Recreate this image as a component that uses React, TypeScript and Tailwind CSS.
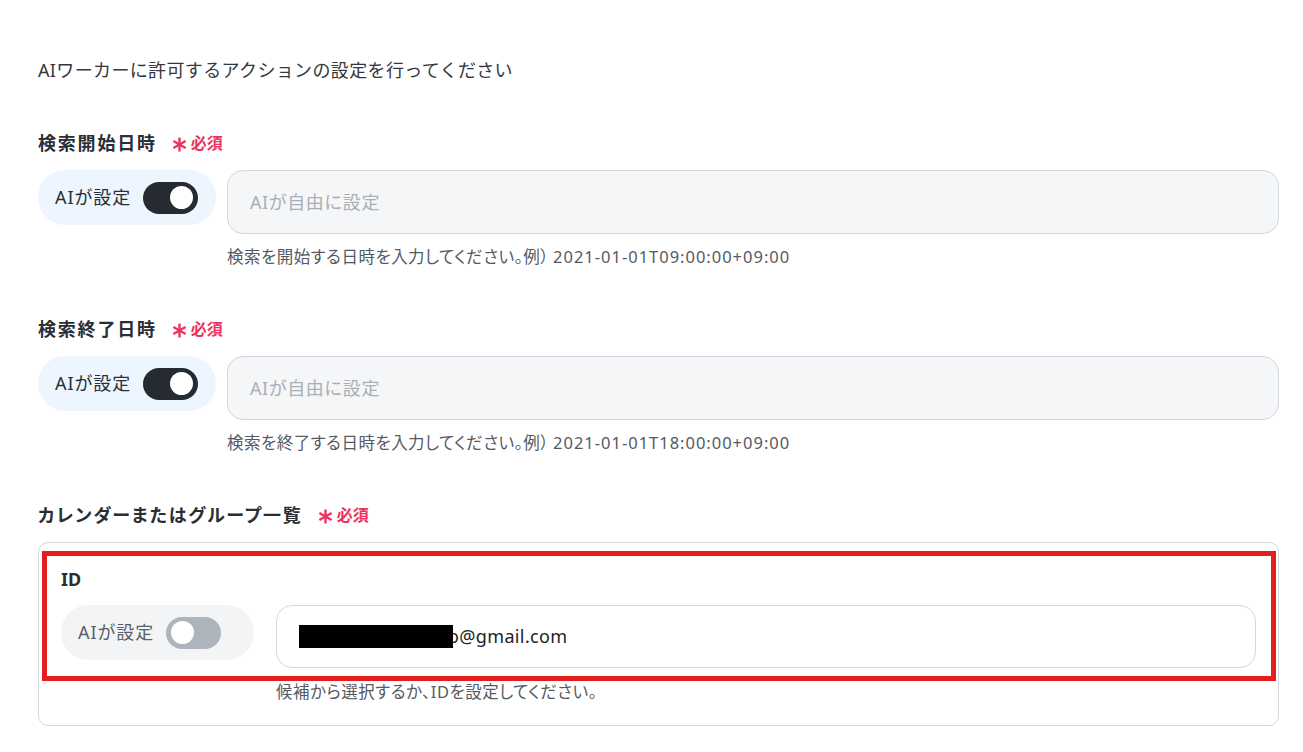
import React from 'react';

const FONT = '"Noto Sans", "Noto Sans CJK JP", sans-serif';

// six-armed asterisk used for the "required" mark
function Asterisk() {
  return (
    <svg width="15" height="15" viewBox="0 0 15 15" className="shrink-0">
      <g stroke="#ee3160" strokeWidth="2.4" strokeLinecap="butt">
        <line x1="7.5" y1="0.5" x2="7.5" y2="14.5" />
        <line x1="1.4" y1="4" x2="13.6" y2="11" />
        <line x1="1.4" y1="11" x2="13.6" y2="4" />
      </g>
    </svg>
  );
}

function Required() {
  return (
    <span className="ml-[15px] flex items-center gap-[4px] text-[#ee3160] font-bold">
      <span className="mt-[3px]">
        <Asterisk />
      </span>
      <span className="text-[16px]">必須</span>
    </span>
  );
}

function FieldLabel({ children }: { children: React.ReactNode }) {
  return (
    <div className="flex items-center h-[26px]">
      <span className="text-[18px] font-bold text-[#2a2e35] tracking-[0.1em] [font-feature-settings:'palt']">
        {children}
      </span>
      <Required />
    </div>
  );
}

function Toggle({ on }: { on: boolean }) {
  return (
    <span
      className={
        on
          ? 'flex items-center justify-end w-[55px] h-[32px] rounded-full bg-[#262a31] px-[5px]'
          : 'flex items-center justify-start w-[55px] h-[32px] rounded-full bg-[#adb4bc] px-[5px]'
      }
    >
      <span className="w-[23px] h-[23px] rounded-full bg-white" />
    </span>
  );
}

function HelpText({ className, children }: { className: string; children: React.ReactNode }) {
  return (
    <p className={`${className} text-[16.5px] leading-[22px] text-[#555a62] tracking-[0.03em] [font-feature-settings:'palt']`}>
      {children}
    </p>
  );
}

function DateField({ label, help, example }: { label: string; help: string; example: string }) {
  return (
    <section>
      <FieldLabel>{label}</FieldLabel>
      <div className="mt-[14px] flex items-start gap-[11px]">
        <div className="flex items-center gap-[12px] h-[55px] w-[178px] shrink-0 rounded-full bg-[#edf5fe] px-[17px]">
          <span className="text-[18px] text-[#2a2e35] tracking-[0.05em]">AIが設定</span>
          <Toggle on />
        </div>
        <div className="flex-1 h-[64px] flex items-center rounded-[16px] border border-[#d3d8e0] bg-[#f5f6f8] pl-[22px]">
          <span className="text-[18px] text-[#a8afb9] tracking-[0.03em]">AIが自由に設定</span>
        </div>
      </div>
      <HelpText className="mt-[12px] ml-[189px]">
        {help}
        <span className="ml-[4px] tracking-[0.06em]">{example}</span>
      </HelpText>
    </section>
  );
}

export default function App() {
  return (
    <div className="min-h-screen w-full bg-white pl-[38px] pr-[24px] pt-[56px]" style={{ fontFamily: FONT }}>
      <p className="text-[18px] leading-[28px] text-[#333740] tracking-[0.02em]">
        AIワーカーに許可するアクションの設定を行ってください
      </p>

      <div className="mt-[46px] flex flex-col gap-[48px]">
        <DateField
          label="検索開始日時"
          help="検索を開始する日時を入力してください。例）"
          example="2021-01-01T09:00:00+09:00"
        />
        <DateField
          label="検索終了日時"
          help="検索を終了する日時を入力してください。例）"
          example="2021-01-01T18:00:00+09:00"
        />

        <section>
          <FieldLabel>カレンダーまたはグループ一覧</FieldLabel>
          <div className="relative mt-[14px] rounded-[10px] border border-[#d3d8e0] px-[22px] pt-[24px] pb-[22px]">
            <div className="h-[24px] flex items-center text-[18px] font-bold text-[#2a2e35]">ID</div>
            <div className="mt-[14px] flex items-start gap-[22px]">
              <div className="flex items-center gap-[12px] h-[55px] w-[193px] shrink-0 rounded-full bg-[#f3f4f6] px-[17px]">
                <span className="text-[18px] text-[#5a5f66] tracking-[0.05em]">AIが設定</span>
                <Toggle on={false} />
              </div>
              <div className="flex-1 h-[63px] flex items-center rounded-[16px] border border-[#d3d8e0] bg-white pl-[22px]">
                <span className="flex items-center text-[18px] text-[#222] tracking-[0.02em]">
                  <span className="relative z-10 inline-block w-[154px] h-[23px] bg-black" />
                  <span className="-ml-[5px]">o@gmail.com</span>
                </span>
              </div>
            </div>
            <HelpText className="mt-[13px] ml-[215px]">候補から選択するか、IDを設定してください。</HelpText>

            {/* highlight frame around the ID row */}
            <div className="absolute left-[3px] right-[2px] top-[8px] h-[130px] border-[5px] border-[#e41e1e] pointer-events-none" />
          </div>
        </section>
      </div>
    </div>
  );
}
